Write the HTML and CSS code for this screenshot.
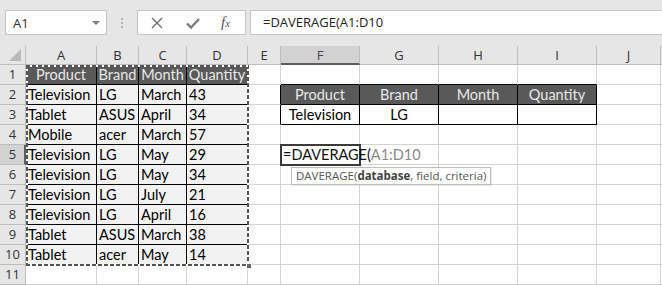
FILE: index.html
```html
<!DOCTYPE html>
<html>
<head>
<meta charset="utf-8">
<link rel="stylesheet" href="styles.css">
</head>
<body>
<div class="band">
  <div class="namebox"><span class="nb-text">A1</span><span class="caret"></span></div>
  <div class="grip"><i></i><i></i><i></i></div>
  <div class="btns">
    <svg class="ic" width="14" height="14" viewBox="0 0 14 14"><path d="M2 2 L12 12 M12 2 L2 12" stroke="#6f6f6f" stroke-width="1.4" fill="none"/></svg>
    <svg class="ic" width="16" height="14" viewBox="0 0 16 14"><path d="M2 7.5 L6 11.5 L14 3" stroke="#7d7d7d" stroke-width="2.4" fill="none"/></svg>
    <span class="fx">f<span class="fx-x">x</span></span>
  </div>
  <div class="formula">=DAVERAGE(A1:D10</div>
</div>
<div class="sheet">
  <div class="corner"><span class="tri"></span></div>
  <div class="ch">A</div><div class="ch">B</div><div class="ch">C</div><div class="ch">D</div><div class="ch">E</div><div class="ch sel">F</div><div class="ch">G</div><div class="ch">H</div><div class="ch">I</div><div class="ch">J</div><div class="ch last"></div>

  <div class="rh">1</div>
  <div class="c h">Product</div><div class="c h">Brand</div><div class="c h">Month</div><div class="c h">Quantity</div><div class="c"></div><div class="c bB"></div><div class="c bB"></div><div class="c bB"></div><div class="c bB"></div><div class="c"></div><div class="c last"></div>

  <div class="rh">2</div>
  <div class="c d">Television</div><div class="c d">LG</div><div class="c d">March</div><div class="c d">43</div><div class="c bR"></div><div class="c h">Product</div><div class="c h">Brand</div><div class="c h">Month</div><div class="c h">Quantity</div><div class="c"></div><div class="c last"></div>

  <div class="rh">3</div>
  <div class="c d">Tablet</div><div class="c d">ASUS</div><div class="c d">April</div><div class="c d">34</div><div class="c bR"></div><div class="c w">Television</div><div class="c w">LG</div><div class="c w"></div><div class="c w"></div><div class="c"></div><div class="c last"></div>

  <div class="rh">4</div>
  <div class="c d">Mobile</div><div class="c d">acer</div><div class="c d">March</div><div class="c d">57</div><div class="c"></div><div class="c"></div><div class="c"></div><div class="c"></div><div class="c"></div><div class="c"></div><div class="c last"></div>

  <div class="rh sel">5</div>
  <div class="c d">Television</div><div class="c d">LG</div><div class="c d">May</div><div class="c d">29</div><div class="c"></div>
  <div class="c active"><span class="edit">=DAVERAGE(<span class="ref">A1:D10</span></span><div class="tip">DAVERAGE(<b>database</b>, field, criteria)</div></div>
  <div class="c"></div><div class="c"></div><div class="c"></div><div class="c"></div><div class="c last"></div>

  <div class="rh">6</div>
  <div class="c d">Television</div><div class="c d">LG</div><div class="c d">May</div><div class="c d">34</div><div class="c"></div><div class="c"></div><div class="c"></div><div class="c"></div><div class="c"></div><div class="c"></div><div class="c last"></div>

  <div class="rh">7</div>
  <div class="c d">Television</div><div class="c d">LG</div><div class="c d">July</div><div class="c d">21</div><div class="c"></div><div class="c"></div><div class="c"></div><div class="c"></div><div class="c"></div><div class="c"></div><div class="c last"></div>

  <div class="rh">8</div>
  <div class="c d">Television</div><div class="c d">LG</div><div class="c d">April</div><div class="c d">16</div><div class="c"></div><div class="c"></div><div class="c"></div><div class="c"></div><div class="c"></div><div class="c"></div><div class="c last"></div>

  <div class="rh">9</div>
  <div class="c d">Tablet</div><div class="c d">ASUS</div><div class="c d">March</div><div class="c d">38</div><div class="c"></div><div class="c"></div><div class="c"></div><div class="c"></div><div class="c"></div><div class="c"></div><div class="c last"></div>

  <div class="rh">10</div>
  <div class="c d">Tablet</div><div class="c d">acer</div><div class="c d">May</div><div class="c d">14</div><div class="c"></div><div class="c"></div><div class="c"></div><div class="c"></div><div class="c"></div><div class="c"></div><div class="c last"></div>

  <div class="rh">11</div>
  <div class="c"></div><div class="c"></div><div class="c"></div><div class="c"></div><div class="c"></div><div class="c"></div><div class="c"></div><div class="c"></div><div class="c"></div><div class="c"></div><div class="c last"></div>

  <div class="ants"><span class="handle"></span></div>
</div>
</body>
</html>
```

FILE: styles.css
```css
* { box-sizing: border-box; }
html, body { margin: 0; padding: 0; background: #fff; overflow: hidden; }
body { width: 662px; height: 285px; font-family: "Open Sans", "Noto Sans", sans-serif; }

.band {
  height: 46px;
  background: #e6e6e6;
  display: flex;
  align-items: flex-start;
  padding-top: 10px;
}
.namebox {
  margin-left: 5px;
  width: 102px;
  height: 25px;
  background: #fff;
  border: 1px solid #c6c6c6;
  display: flex;
  align-items: center;
  padding-left: 7px;
  padding-right: 6px;
}
.nb-text { font-size: 13px; color: #333; flex: 1; }
.caret {
  width: 0; height: 0;
  border-left: 4px solid transparent;
  border-right: 4px solid transparent;
  border-top: 4px solid #808080;
}
.grip {
  width: 30px;
  height: 25px;
  display: flex;
  flex-direction: column;
  align-items: center;
  justify-content: center;
  gap: 2px;
}
.grip i { display: block; width: 2px; height: 2px; background: #b3b3b3; }
.btns {
  width: 109px;
  height: 25px;
  background: #fff;
  border: 1px solid #c6c6c6;
  display: flex;
  align-items: center;
  padding-left: 12px;
  gap: 21px;
}
.ic { display: block; }
.fx {
  font-family: "Liberation Serif", serif;
  font-style: italic;
  font-size: 15px;
  color: #555;
  margin-left: -1px;
}
.fx-x { font-size: 11px; }
.formula {
  margin-left: 4px;
  flex: 1;
  height: 25px;
  background: #fff;
  border: 1px solid #c6c6c6;
  border-right: none;
  font-size: 13px;
  color: #222;
  padding-left: 12px;
  line-height: 23px;
}

.sheet {
  position: relative;
  display: grid;
  grid-template-columns: 26px 71px 42px 48px 61px 33px 79px 79px 79px 79px 64px 1fr;
  grid-template-rows: 19px repeat(11, 20px);
  font-family: "Lato", "Liberation Sans", sans-serif;
  font-size: 14.5px;
}
.corner {
  background: #e6e6e6;
  border-right: 1px solid #bdbdbd;
  border-bottom: 1px solid #bdbdbd;
  position: relative;
}
.tri {
  position: absolute;
  right: 4px;
  bottom: 3px;
  width: 0; height: 0;
  border-left: 12px solid transparent;
  border-bottom: 12px solid #b9b9b9;
}
.ch {
  background: #e6e6e6;
  border-right: 1px solid #bdbdbd;
  border-bottom: 1px solid #bdbdbd;
  font-family: "Open Sans", "Noto Sans", sans-serif;
  font-size: 13px;
  color: #333;
  text-align: center;
  line-height: 18px;
}
.ch.last { border-right: none; }
.ch.sel {
  background: #d2d2d2;
  border-bottom: 2px solid #5e5e5e;
  color: #444;
}
.rh {
  background: #e6e6e6;
  border-right: 1px solid #bdbdbd;
  border-bottom: 1px solid #bdbdbd;
  font-family: "Open Sans", "Noto Sans", sans-serif;
  font-size: 13px;
  color: #333;
  text-align: center;
  line-height: 19px;
}
.rh.sel {
  background: #d2d2d2;
  border-right: 2px solid #5e5e5e;
  padding-left: 1px;
}
.c {
  border-right: 1px solid #d4d4d4;
  border-bottom: 1px solid #d4d4d4;
  line-height: 20px;
  padding-left: 2px;
  white-space: nowrap;
  color: #000;
}
.c.last { border-right: none; }
.c.h {
  background: #595959;
  color: #e8e8e8;
  text-align: center;
  border-right-color: #000;
  border-bottom-color: #000;
  padding-left: 0;
}
.c.d {
  background: #f2f2f2;
  border-right-color: #000;
  border-bottom-color: #000;
}
.c.w {
  background: #fff;
  text-align: center;
  border-right-color: #000;
  border-bottom-color: #000;
  padding-left: 0;
}
.c.bR { border-right-color: #000; }
.c.bB { border-bottom-color: #000; }

.c.active {
  position: relative;
  z-index: 3;
  outline: 2px solid #3a3a3a;
  outline-offset: -1px;
  background: #fff;
  overflow: visible;
}
.edit { position: relative; color: #111; }
.ref { color: #8a8a8a; }
.tip {
  position: absolute;
  left: 10px;
  top: 22px;
  height: 18px;
  padding: 0 4px;
  background: #fff;
  border: 1px solid #bdbdbd;
  box-shadow: 1px 1px 1px rgba(0,0,0,0.08);
  font-family: "Open Sans", "Noto Sans", sans-serif;
  font-size: 11.5px;
  line-height: 16px;
  color: #555;
  white-space: nowrap;
}
.tip b { font-weight: 700; color: #444; }

.ants {
  position: absolute;
  grid-column: 2 / 6;
  grid-row: 2 / 12;
  top: 0;
  left: 0;
  right: -1px;
  bottom: -1px;
  z-index: 2;
  pointer-events: none;
  background:
    repeating-linear-gradient(90deg, #555 0 4px, #fff 4px 6px) top left / 100% 2px no-repeat,
    repeating-linear-gradient(90deg, #555 0 4px, #fff 4px 6px) bottom left / 100% 2px no-repeat,
    repeating-linear-gradient(180deg, #555 0 4px, #fff 4px 6px) top left / 2px 100% no-repeat,
    repeating-linear-gradient(180deg, #555 0 4px, #fff 4px 6px) top right / 2px 100% no-repeat;
}
.handle {
  position: absolute;
  right: -3px;
  bottom: -3px;
  width: 6px;
  height: 6px;
  background: #666;
  border: 1px solid #fff;
}
```
